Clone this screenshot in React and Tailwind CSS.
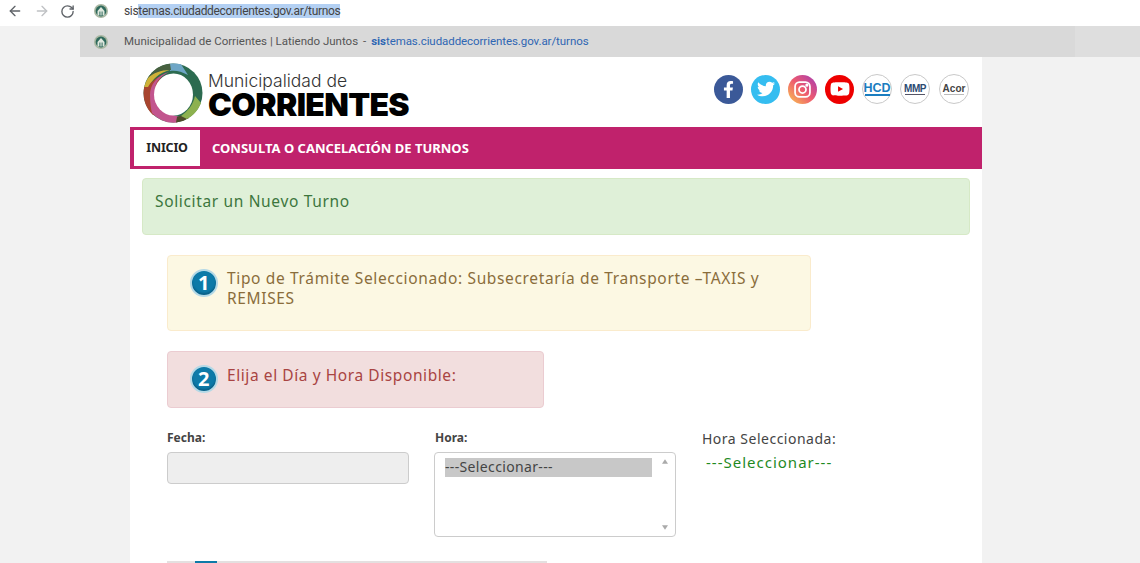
import React from "react";
import { ArrowLeft, ArrowRight, RotateCw } from "lucide-react";
import { FaFacebookF, FaTwitter, FaYoutube } from "react-icons/fa";

function Logo() {
  return (
    <svg viewBox="0 0 60 60" className="w-[60px] h-[60px] shrink-0">
      <circle cx="30" cy="30" r="29.5" fill="#2c6b50" />
      <path d="M27 .8A29.5 29.5 0 0 1 38 1.2L45 12C38 8 32 7 27 8Z" fill="#6ea6c6" />
      <path d="M27 .7A30 30 0 0 0 6 13L3 22C8 12 18 6 28 7Z" fill="#47603f" />
      <path d="M5 15A30 30 0 0 0 1.2 24L6 24C9 16 16 10 27 7C18 7 10 10 5 15Z" fill="#cfb238" />
      <path d="M1.2 24A30 30 0 0 0 10 52L18 53C10 44 10 24 20 12C12 15 7 20 5 24Z" fill="#a8452f" />
      <path d="M9 50A30 30 0 0 0 34 59.6L38 54C22 52 12 40 12 27C12 20 16 14 26 9C14 12 7 22 7 32C7 40 8 46 9 50Z" fill="#c2558e" />
      <path d="M33 59.6A30 30 0 0 0 46 55L40 52L34 54Z" fill="#4d4a2a" />
      <path d="M44 56A30 30 0 0 0 58 40L52 33C50 42 45 48 38 53Z" fill="#8db14f" />
      <ellipse cx="30.5" cy="31.5" rx="19.5" ry="21" fill="#ffffff" />
    </svg>
  );
}

function Favicon() {
  return (
    <svg viewBox="0 0 14 14" className="w-[14px] h-[14px] shrink-0">
      <circle cx="7" cy="7" r="7" fill="#a9b7a2" />
      <circle cx="7" cy="7" r="5.4" fill="#2f6a5c" />
      <path d="M3.5 7L7 3L10.5 7V11.5H8.6V7.5H7.6V11.5H6.4V7.5H5.4V11.5H3.5Z" fill="#dfe8de" />
    </svg>
  );
}

function Round({ children, className }) {
  return (
    <div className={`rounded-full flex items-center justify-center shrink-0 ${className}`}>
      {children}
    </div>
  );
}

function Step({ n }) {
  return (
    <div className="w-[28px] h-[28px] rounded-full bg-[#0d7aa8] border-2 border-[#b5d9e6] flex items-center justify-center shrink-0 text-white font-bold text-[20px] leading-none [box-shadow:inset_0_-2px_2px_#0a5f86]">
      {n}
    </div>
  );
}

export default function App() {
  return (
    <div className="h-[563px] overflow-hidden bg-[#f2f2f2] font-['Noto_Sans',sans-serif]">
      <div className="h-[26px] bg-white flex items-center pb-[4px]">
        <div className="w-[80px] flex items-center pl-[7px] text-[#5f6368] shrink-0">
          <ArrowLeft size={16} strokeWidth={2} />
          <ArrowRight size={16} strokeWidth={2} className="ml-[11px] text-[#bfc1c4]" />
          <RotateCw size={15} strokeWidth={2.2} className="ml-[10px]" />
        </div>
        <div className="pl-[14px] flex items-center">
          <Favicon />
          <div className="ml-[16px] text-[12px] leading-[18px] text-[#444] font-['Roboto',sans-serif] tracking-[-0.32px]">
            sis<span className="bg-[#b3d0f3]">temas.ciudaddecorrientes.gov.ar/turnos</span>
          </div>
        </div>
      </div>

      <div className="h-[31px] flex">
        <div className="w-[80px] shrink-0" />
        <div className="w-[995px] bg-[#d9d9d9] flex items-center pl-[14px] text-[11.5px] font-['Roboto',sans-serif]">
          <Favicon />
          <span className="ml-[16px] text-[#555]">Municipalidad de Corrientes | Latiendo Juntos</span>
          <span className="text-[#555] ml-[5px]">-</span>
          <span className="ml-[5px] text-[#2f66b3] tracking-[-0.07px]">
            <b>sis</b>temas.ciudaddecorrientes.gov.ar/turnos
          </span>
        </div>
        <div className="flex-1 bg-[#dedede]" />
      </div>

      <div className="ml-[130px] w-[852px] bg-white h-[506px]">
        <div className="h-[70px] flex items-center justify-between pl-[13px] pr-[13px]">
          <div className="flex items-center gap-[5px] pt-[1px]">
            <Logo />
            <div className="flex flex-col font-['Inter',sans-serif] text-black">
              <span className="text-[17.5px] leading-[20px] text-[#333] font-light mt-[5px]">Municipalidad de</span>
              <span className="text-[32px] leading-[28px] font-black tracking-[-0.7px]">CORRIENTES</span>
            </div>
          </div>
          <div className="flex items-center mt-[-6px]">
            <Round className="w-[29px] h-[29px] bg-[#3b5998] text-white"><FaFacebookF size={17} /></Round>
            <Round className="ml-[8px] w-[29px] h-[29px] bg-[#35bdf0] text-white"><FaTwitter size={18} /></Round>
            <Round className="ml-[8px] w-[29px] h-[29px] bg-[linear-gradient(45deg,#f9c74f_0%,#ee5a6f_50%,#a43ab5_100%)]">
              <svg viewBox="0 0 24 24" className="w-[21px] h-[21px]" fill="none" stroke="#fff" strokeWidth="2">
                <rect x="3.5" y="3.5" width="17" height="17" rx="5" />
                <circle cx="12" cy="12" r="4" />
                <circle cx="17" cy="7" r="0.8" fill="#fff" />
              </svg>
            </Round>
            <Round className="ml-[8px] w-[29px] h-[29px] bg-[#ee0000] text-white"><FaYoutube size={20} /></Round>
            <Round className="ml-[8px] w-[30px] h-[30px] border border-[#c9c9c9] bg-white flex-col">
              <span className="text-[#1a7dc0] text-[12.5px] leading-[11px] font-black font-['Liberation_Sans',sans-serif]">HCD</span>
              <span className="w-[25px] h-[2px] bg-[#1a7dc0]" />
            </Round>
            <Round className="ml-[8px] w-[30px] h-[30px] border border-[#c9c9c9] bg-white flex-col">
              <span className="text-[#2c4a72] text-[10px] leading-[10px] font-black font-['Liberation_Sans',sans-serif] tracking-[-0.5px]">MMP</span>
              <span className="w-[20px] h-[1px] bg-[#556]" />
            </Round>
            <Round className="ml-[9px] w-[30px] h-[30px] border border-[#c9c9c9] bg-white flex-col">
              <span className="text-[#444] text-[10px] leading-[10px] font-bold font-['Liberation_Sans',sans-serif]">Acor</span>
              <span className="w-[20px] h-[1px] bg-[#bbb]" />
            </Round>
          </div>
        </div>

        <div className="h-[42px] bg-[#c0226c] flex items-center pl-[4px]">
          <div className="w-[66px] h-[36px] bg-white flex items-center justify-center text-[12.5px] font-bold tracking-[-0.2px] text-[#222] pt-[1px]">
            INICIO
          </div>
          <div className="ml-[12px] text-[13px] font-bold text-white pt-[1px]">
            CONSULTA O CANCELACIÓN DE TURNOS
          </div>
        </div>

        <div className="pt-[9px] pl-[12px] pr-[12px]">
          <div className="h-[57px] bg-[#dff0d8] border border-[#d6e9c6] rounded-[4px] pl-[12px] pt-[11px] text-[#3c763d] text-[15.5px] leading-[22px] tracking-[0.65px]">
            Solicitar un Nuevo Turno
          </div>
        </div>

        <div className="pl-[37px]">
          <div className="mt-[20px] w-[644px] h-[76px] bg-[#fcf8e3] border border-[#faebcc] rounded-[4px] flex gap-[9px] pl-[22px] pt-[12px] pr-[40px] text-[#8a6d3b] text-[15.5px] leading-[20px] tracking-[0.65px]">
            <div className="pt-[1px]"><Step n="1" /></div>
            <div>Tipo de Trámite Seleccionado: Subsecretaría de Transporte –TAXIS y REMISES</div>
          </div>

          <div className="mt-[20px] w-[377px] h-[57px] bg-[#f2dede] border border-[#ebccd1] rounded-[4px] flex gap-[9px] pl-[22px] pt-[13px] text-[#a94442] text-[15.5px] leading-[20px] tracking-[0.58px]">
            <div><Step n="2" /></div>
            <div>Elija el Día y Hora Disponible:</div>
          </div>

          <div className="mt-[22px] flex items-start">
            <div className="w-[267px]">
              <div className="text-[12px] leading-[16px] font-bold text-[#444]">Fecha:</div>
              <div className="mt-[6px] w-[242px] h-[32px] bg-[#eeeeee] border border-[#cccccc] rounded-[4px]" />
            </div>
            <div className="w-[268px]">
              <div className="text-[12px] leading-[16px] font-bold text-[#444] pl-[1px]">Hora:</div>
              <div className="mt-[6px] w-[242px] h-[85px] bg-white border border-[#cccccc] rounded-[4px] pl-[10px] pt-[5px] flex justify-between">
                <div className="w-[207px] h-[19px] bg-[#c8c8c8] text-[14px] leading-[18px] text-[#444] tracking-[0.35px]">---Seleccionar---</div>
                <div className="w-[20px] flex flex-col justify-between items-center py-[1px] pb-[6px] text-[#aaa]">
                  <svg viewBox="0 0 8 6" className="w-[6px] h-[5px]"><path d="M4 0L8 6H0Z" fill="currentColor" /></svg>
                  <svg viewBox="0 0 8 6" className="w-[6px] h-[5px]"><path d="M4 6L8 0H0Z" fill="currentColor" /></svg>
                </div>
              </div>
            </div>
            <div>
              <div className="text-[14px] leading-[18px] text-[#444] tracking-[0.5px]">Hora Seleccionada:</div>
              <div className="mt-[5px] ml-[4px] text-[15px] leading-[18px] text-[#1f8a1f] tracking-[1px]">---Seleccionar---</div>
            </div>
          </div>

          <div className="mt-[24px] w-[380px] h-[2px] bg-[#e4e0e0] pl-[28px]">
            <div className="w-[22px] h-[2px] bg-[#0d7aa8]" />
          </div>
        </div>
      </div>
    </div>
  );
}
